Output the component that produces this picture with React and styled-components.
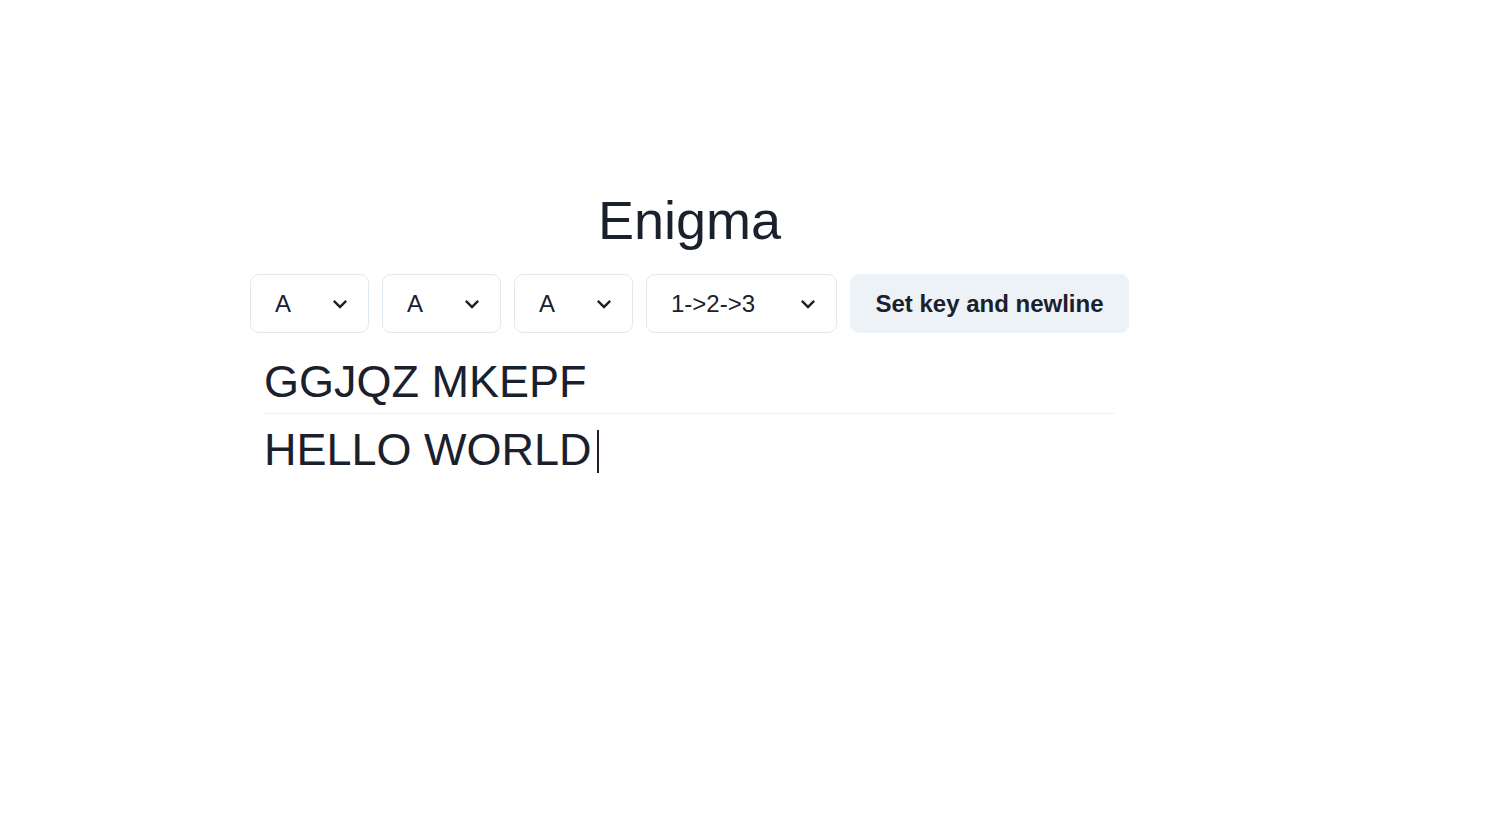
import React, { useState } from 'react';
import styled, { createGlobalStyle } from 'styled-components';

const GlobalStyle = createGlobalStyle`
  body {
    margin: 0;
    background: #ffffff;
    color: #1a202c;
    font-family: 'Liberation Sans', Arial, sans-serif;
  }
`;

const Page = styled.div`
  min-height: 100vh;
  padding: 188px 0 0 250px;
  box-sizing: border-box;
`;

const Column = styled.div`
  width: 879px;
  display: flex;
  flex-direction: column;
`;

const Title = styled.h1`
  margin: 0 0 21px;
  text-align: center;
  font-size: 54px;
  font-weight: 400;
  line-height: 65px;
`;

const Controls = styled.div`
  display: flex;
  gap: 13px;
  height: 59px;
`;

const SelectWrap = styled.div`
  position: relative;
  width: ${(p) => p.$width}px;
  height: 100%;
`;

const Select = styled.select`
  appearance: none;
  width: 100%;
  height: 100%;
  padding: 0 48px 0 24px;
  border: 1px solid #e2e8f0;
  border-radius: 9px;
  background: #fff;
  color: #1a202c;
  font-family: inherit;
  font-size: 24px;
  outline: none;
`;

const Chevron = styled.svg`
  position: absolute;
  right: 15px;
  top: 50%;
  transform: translateY(-50%);
  width: 28px;
  height: 28px;
  pointer-events: none;
`;

const Button = styled.button`
  width: 279px;
  height: 100%;
  border: none;
  border-radius: 9px;
  background: #edf2f7;
  color: #1a202c;
  font-family: inherit;
  font-size: 24px;
  font-weight: 700;
  cursor: pointer;
`;

const Lines = styled.div`
  margin-top: 22px;
  padding: 0 14px;
`;

const Output = styled.div`
  font-size: 45px;
  line-height: 54px;
  padding-bottom: 4px;
  border-bottom: 1px solid #edf2f7;
`;

const Input = styled.div`
  margin-top: 9px;
  font-size: 45px;
  line-height: 54px;
`;

const Caret = styled.span`
  display: inline-block;
  width: 2px;
  height: 43px;
  margin-left: 5px;
  vertical-align: -8px;
  background: #1a202c;
`;

const letters = 'ABCDEFGHIJKLMNOPQRSTUVWXYZ'.split('');

const RotorSelect = ({ width, options, value, onChange }) => (
  <SelectWrap $width={width}>
    <Select value={value} onChange={(e) => onChange(e.target.value)}>
      {options.map((o) => (
        <option key={o} value={o}>{o}</option>
      ))}
    </Select>
    <Chevron viewBox="0 0 24 24">
      <path fill="#1a202c" d="M16.59 8.59L12 13.17 7.41 8.59 6 10l6 6 6-6z" />
    </Chevron>
  </SelectWrap>
);

const App = () => {
  const [r1, setR1] = useState('A');
  const [r2, setR2] = useState('A');
  const [r3, setR3] = useState('A');
  const [order, setOrder] = useState('1->2->3');

  return (
    <>
      <GlobalStyle />
      <Page>
        <Column>
          <Title>Enigma</Title>
          <Controls>
            <RotorSelect width={119} options={letters} value={r1} onChange={setR1} />
            <RotorSelect width={119} options={letters} value={r2} onChange={setR2} />
            <RotorSelect width={119} options={letters} value={r3} onChange={setR3} />
            <RotorSelect
              width={191}
              options={['1->2->3', '1->3->2', '2->1->3', '2->3->1', '3->1->2', '3->2->1']}
              value={order}
              onChange={setOrder}
            />
            <Button type="button">Set key and newline</Button>
          </Controls>
          <Lines>
            <Output>GGJQZ MKEPF</Output>
            <Input>HELLO WORLD<Caret /></Input>
          </Lines>
        </Column>
      </Page>
    </>
  );
};

export default App;
